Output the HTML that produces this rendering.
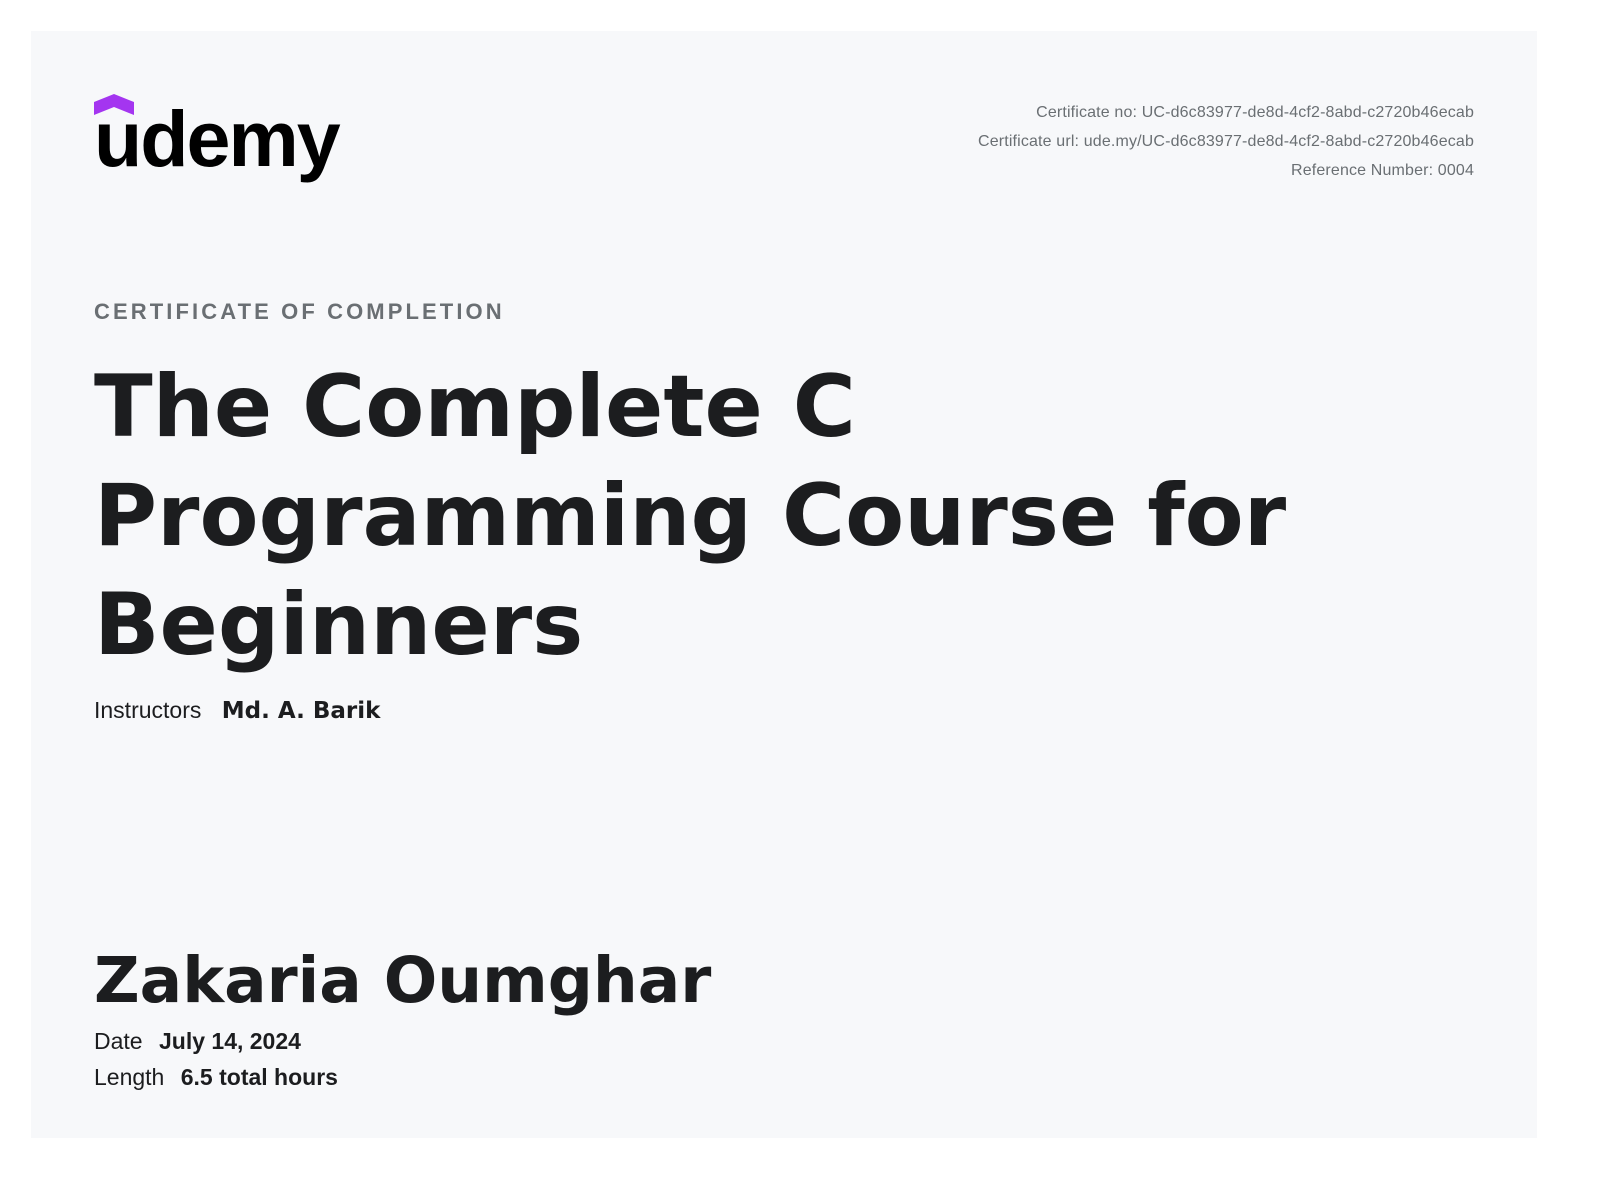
<!DOCTYPE html>
<html><head><meta charset="utf-8"><style>
*{margin:0;padding:0;box-sizing:border-box}
html,body{width:1600px;height:1190px;background:#fff;overflow:hidden}
.card{position:absolute;left:31px;top:31px;width:1506px;height:1107px;background:#f7f8fa}
.abs{position:absolute;white-space:nowrap}
.meta{right:126px;top:98px;text-align:right;font:16px/29px "Liberation Sans",sans-serif;letter-spacing:0.15px;color:#6a6f73}
.logo{left:94px;top:93px;font:bold 79px "Liberation Sans",sans-serif;letter-spacing:-2px;color:#000}
.cert{left:94px;top:299px;font:bold 22px "Liberation Sans",sans-serif;letter-spacing:3.1px;color:#6a6f73}
.title{left:94px;top:353px;font:bold 86px/109px "DejaVu Sans",sans-serif;color:#1c1d1f}
.instr{left:94px;top:697px;font:23px "Liberation Sans",sans-serif;color:#1c1d1f}
.instr b{font-family:"DejaVu Sans",sans-serif;margin-left:14px}
.name{left:94px;top:944px;font:bold 63px "DejaVu Sans",sans-serif;color:#1c1d1f}
.small{left:94px;font:23px "Liberation Sans",sans-serif;color:#1c1d1f}
.small b{margin-left:10px}
</style></head><body>
<div class="card"></div>
<svg class="abs" style="left:94px;top:94px" width="40" height="22" viewBox="0 0 40 22"><path d="M0 8 L20 0 L40 8 V21 L20 13 L0 21 Z" fill="#a435f0"/></svg>
<div class="abs logo">udemy</div>
<div class="abs meta">Certificate no: UC-d6c83977-de8d-4cf2-8abd-c2720b46ecab<br>Certificate url: ude.my/UC-d6c83977-de8d-4cf2-8abd-c2720b46ecab<br>Reference Number: 0004</div>
<div class="abs cert">CERTIFICATE OF COMPLETION</div>
<div class="abs title">The Complete C<br>Programming Course for<br>Beginners</div>
<div class="abs instr">Instructors <b>Md. A. Barik</b></div>
<div class="abs name">Zakaria Oumghar</div>
<div class="abs small" style="top:1028px">Date <b>July 14, 2024</b></div>
<div class="abs small" style="top:1064px">Length <b>6.5 total hours</b></div>
</body></html>
